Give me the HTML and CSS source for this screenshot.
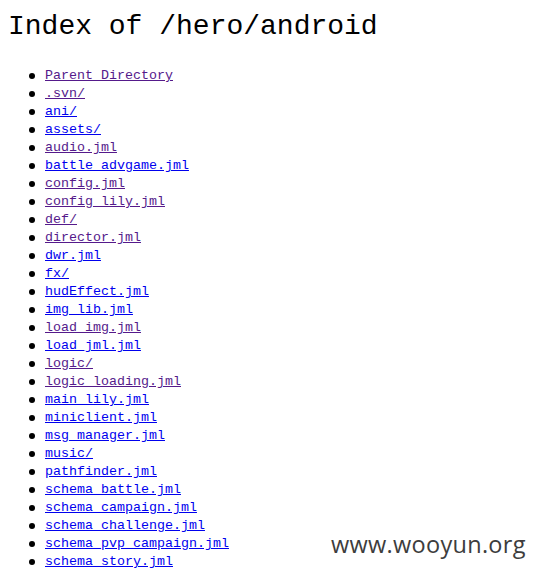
FILE: index.html
```html
<!DOCTYPE html>
<html>
<head>
<meta charset="utf-8">
<title>Index of /hero/android</title>
<link rel="stylesheet" href="styles.css">
</head>
<body>
<h1 class="title">Index of /hero/android</h1>
<ul class="listing">
<li><a class="visited" href="#">Parent Directory</a></li>
<li><a class="visited" href="#">.svn/</a></li>
<li><a href="#">ani/</a></li>
<li><a href="#">assets/</a></li>
<li><a class="visited" href="#">audio.jml</a></li>
<li><a href="#">battle_advgame.jml</a></li>
<li><a class="visited" href="#">config.jml</a></li>
<li><a class="visited" href="#">config_lily.jml</a></li>
<li><a class="visited" href="#">def/</a></li>
<li><a class="visited" href="#">director.jml</a></li>
<li><a href="#">dwr.jml</a></li>
<li><a href="#">fx/</a></li>
<li><a href="#">hudEffect.jml</a></li>
<li><a href="#">img_lib.jml</a></li>
<li><a class="visited" href="#">load_img.jml</a></li>
<li><a href="#">load_jml.jml</a></li>
<li><a class="visited" href="#">logic/</a></li>
<li><a class="visited" href="#">logic_loading.jml</a></li>
<li><a href="#">main_lily.jml</a></li>
<li><a href="#">miniclient.jml</a></li>
<li><a href="#">msg_manager.jml</a></li>
<li><a href="#">music/</a></li>
<li><a href="#">pathfinder.jml</a></li>
<li><a href="#">schema_battle.jml</a></li>
<li><a href="#">schema_campaign.jml</a></li>
<li><a href="#">schema_challenge.jml</a></li>
<li><a href="#">schema_pvp_campaign.jml</a></li>
<li><a href="#">schema_story.jml</a></li>
<li><a href="#">schema_worldboss.jml</a></li>
</ul>
<div class="watermark">www.wooyun.org</div>
</body>
</html>
```

FILE: styles.css
```css
html, body {
  margin: 0;
  padding: 0;
  background: #ffffff;
  overflow: hidden;
}
body {
  padding: 0 8px;
  font-family: "Liberation Mono", "DejaVu Sans Mono", monospace;
  color: #000;
  height: 574px;
  position: relative;
}
.title {
  margin: 0;
  padding-top: 10px;
  font-family: "Liberation Mono", monospace;
  font-weight: normal;
  font-size: 28px;
  line-height: 34px;
  letter-spacing: 0;
}
.listing {
  margin: 23px 0 0 0;
  padding-left: 21px;
  list-style: none;
  font-size: 13.33px;
  line-height: 18px;
}
.listing li {
  height: 18px;
  display: flex;
  align-items: center;
}
.listing li::before {
  content: "";
  width: 6px;
  height: 6px;
  border-radius: 50%;
  background: #000;
  margin: 0 10px 0 0;
  flex: none;
}
.listing a {
  color: #0000ee;
  text-decoration: underline;
}
.listing a.visited {
  color: #551a8b;
}
.watermark {
  position: absolute;
  left: 331px;
  top: 528px;
  font-family: "Open Sans", "DejaVu Sans", sans-serif;
  font-size: 23.5px;
  color: #3d3d3d;
  letter-spacing: 0.3px;
}
```
